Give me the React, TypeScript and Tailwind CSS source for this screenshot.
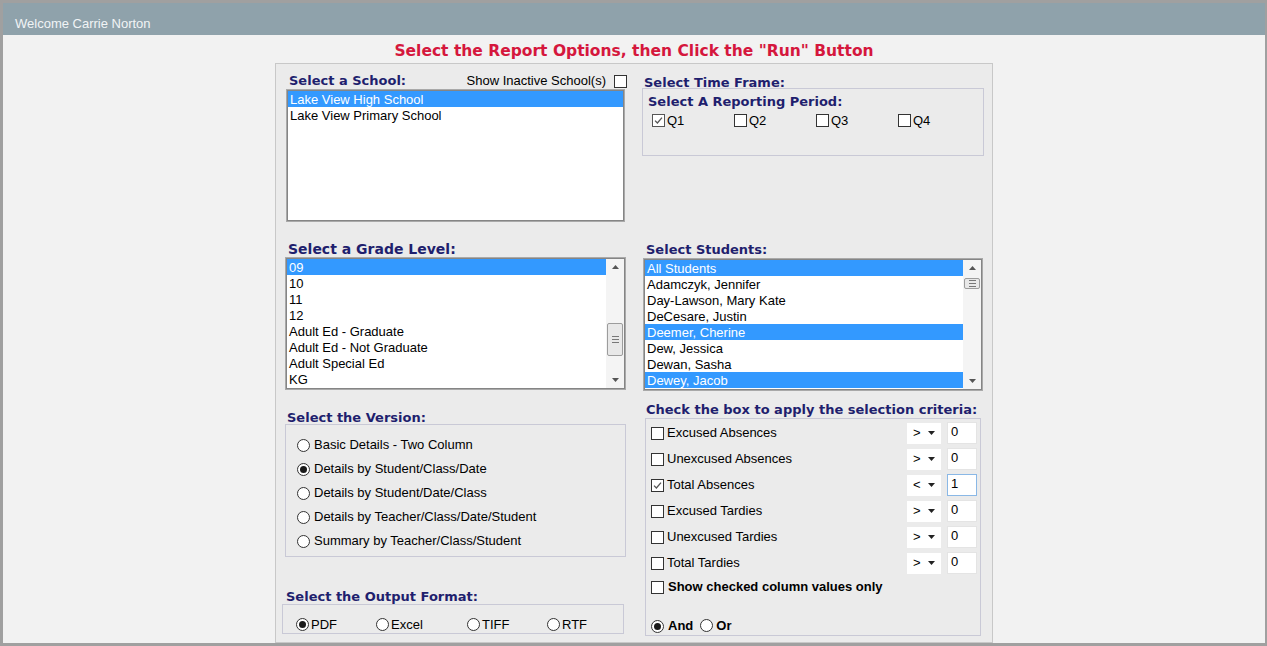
import React from "react";

function Check({ checked, dim }: { checked?: boolean; dim?: boolean }) {
  return (
    <span
      className={`inline-flex w-[13px] h-[13px] border ${dim ? "border-[#555]" : "border-[#333]"} bg-white items-center justify-center shrink-0`}
    >
      {checked && (
        <svg width="9" height="9" viewBox="0 0 9 9">
          <path d="M1 4.6 L3.4 7 L8 1.6" stroke="#555" strokeWidth="1.3" fill="none" />
        </svg>
      )}
    </span>
  );
}

function Radio({ checked }: { checked?: boolean }) {
  return (
    <span className="inline-flex w-[13px] h-[13px] rounded-full border border-[#333] bg-white items-center justify-center shrink-0">
      {checked && <span className="w-[7px] h-[7px] rounded-full bg-[#1a1a1a]" />}
    </span>
  );
}

function Label({ children, className = "" }: { children: React.ReactNode; className?: string }) {
  return (
    <div
      className={`font-['DejaVu_Sans',Verdana,sans-serif] font-bold text-[#1f1f6e] text-[13px] whitespace-nowrap ${className}`}
    >
      {children}
    </div>
  );
}

function ScrollBar({ thumbTop, thumbH }: { thumbTop: number; thumbH: number }) {
  return (
    <div className="w-[18px] h-full bg-[#f4f4f4] flex flex-col items-center relative shrink-0">
      <div className="h-[16px] w-full flex items-center justify-center">
        <svg width="7" height="4" viewBox="0 0 7 4">
          <path d="M0 4 L3.5 0 L7 4 Z" fill="#555" />
        </svg>
      </div>
      <div
        className="absolute left-[1px] right-[1px] border border-[#9c9c9c] bg-[#e8e8e8] rounded-[2px] flex flex-col items-center justify-center gap-[2px]"
        style={{ top: thumbTop, height: thumbH }}
      >
        <span className="block w-[7px] h-[1px] bg-[#777]" />
        <span className="block w-[7px] h-[1px] bg-[#777]" />
        <span className="block w-[7px] h-[1px] bg-[#777]" />
      </div>
      <div className="mt-auto h-[16px] w-full flex items-center justify-center">
        <svg width="7" height="4" viewBox="0 0 7 4">
          <path d="M0 0 L3.5 4 L7 0 Z" fill="#555" />
        </svg>
      </div>
    </div>
  );
}

function ListBox({
  items,
  selected,
  scroll,
  className = "",
}: {
  items: string[];
  selected: number[];
  scroll?: { top: number; h: number };
  className?: string;
}) {
  return (
    <div
      className={`h-[133px] bg-white border border-[#a9a9a9] p-[1px] shadow-[inset_0_0_0_1px_#858585] flex overflow-hidden ${className}`}
    >
      <div className="flex-1 flex flex-col min-w-0">
        {items.map((it, i) => (
          <div
            key={i}
            className={`h-[16px] leading-[17px] pl-[2px] text-[13px] font-['Liberation_Sans',Arial,sans-serif] whitespace-nowrap ${
              selected.includes(i) ? "bg-[#3399ff] text-white" : "text-black"
            }`}
          >
            {it}
          </div>
        ))}
      </div>
      {scroll && <ScrollBar thumbTop={scroll.top} thumbH={scroll.h} />}
    </div>
  );
}

function OpSelect({ op }: { op: string }) {
  return (
    <div className="w-[34px] h-[21px] bg-white flex items-center pl-[6px] pr-[6px] justify-between text-[13px] font-['Liberation_Sans',Arial,sans-serif] text-black">
      <span>{op}</span>
      <svg width="7" height="4" viewBox="0 0 7 4">
        <path d="M0 0 L3.5 4 L7 0 Z" fill="#222" />
      </svg>
    </div>
  );
}

function NumInput({ v, focus }: { v: string; focus?: boolean }) {
  return (
    <div
      className={`w-[30px] h-[22px] bg-white border ${focus ? "border-[#8ab8e6]" : "border-[#e4e4e4]"} pl-[3px] text-[13px] leading-[18px] font-['Liberation_Sans',Arial,sans-serif] text-black`}
    >
      {v}
    </div>
  );
}

export default function App() {
  const arial = "font-['Liberation_Sans',Arial,sans-serif] text-[13px] text-black";
  const criteria: [string, string, string, boolean][] = [
    ["Excused Absences", ">", "0", false],
    ["Unexcused Absences", ">", "0", false],
    ["Total Absences", "<", "1", true],
    ["Excused Tardies", ">", "0", false],
    ["Unexcused Tardies", ">", "0", false],
    ["Total Tardies", ">", "0", false],
  ];
  const versions = [
    "Basic Details - Two Column",
    "Details by Student/Class/Date",
    "Details by Student/Date/Class",
    "Details by Teacher/Class/Date/Student",
    "Summary by Teacher/Class/Student",
  ];
  return (
    <div className="w-[1267px] h-[646px] overflow-hidden bg-[#f2f2f2] border-t-[3px] border-l-[3px] border-r-[2px] border-b-[3px] border-[#a0a0a0] flex flex-col">
      <div className="h-[32px] shrink-0 bg-[#8fa2ab] flex items-center pl-[12px] pt-[10px] text-[13px] text-[#f1f4f6] font-['Liberation_Sans',Arial,sans-serif]">
        Welcome Carrie Norton
      </div>
      <div className="h-[28px] shrink-0 flex items-center justify-center pt-[6px] font-['DejaVu_Sans',Verdana,sans-serif] font-bold text-[15.5px] text-[#d5173d]">
        Select the Report Options, then Click the "Run" Button
      </div>
      <div className="ml-[272px] w-[718px] flex-1 bg-[#ebebeb] border border-[#c8c8c8] flex pt-[9px] pl-[9px]">
        {/* Left column */}
        <div className="w-[341px] flex flex-col shrink-0">
          <div className="h-[16px] flex items-center justify-between">
            <Label className="pl-[4px] h-[16px] leading-[16px]">Select a School:</Label>
            <div className={`flex items-center gap-[8px] ${arial}`}>
              <span>Show Inactive School(s)</span>
              <span className="mt-[5px] mr-[-1px]">
                <Check />
              </span>
            </div>
          </div>
          <ListBox
            className="ml-[1px] w-[339px]"
            items={["Lake View High School", "Lake View Primary School"]}
            selected={[0]}
          />
          <Label className="mt-[19px] pl-[3px] text-[14px] h-[16px] leading-[16px]">Select a Grade Level:</Label>
          <ListBox
            className="w-[341px]"
            items={["09", "10", "11", "12", "Adult Ed - Graduate", "Adult Ed - Not Graduate", "Adult Special Ed", "KG"]}
            selected={[0]}
            scroll={{ top: 64, h: 33 }}
          />
          <Label className="mt-[21px] pl-[2px] h-[13px] leading-[13px]">Select the Version:</Label>
          <div className="h-[133px] border border-[#c9c9d6] flex flex-col pt-[8px] pl-[11px]">
            {versions.map((v, i) => (
              <div key={v} className={`h-[24px] flex items-center gap-[4px] ${arial}`}>
                <Radio checked={i === 1} />
                <span>{v}</span>
              </div>
            ))}
          </div>
          <Label className="mt-[33px] pl-[1px] h-[14px] leading-[14px]">Select the Output Format:</Label>
          <div className="ml-[-3px] w-[342px] h-[30px] border border-[#c9c9d6] flex items-center pl-[13px] pt-[11px]">
            {[
              ["PDF", true, 80],
              ["Excel", false, 91],
              ["TIFF", false, 80],
              ["RTF", false, 60],
            ].map(([t, c, w]) => (
              <div key={t as string} className={`flex items-center gap-[2px] ${arial}`} style={{ width: w as number }}>
                <Radio checked={c as boolean} />
                <span>{t as string}</span>
              </div>
            ))}
          </div>
        </div>

        {/* Right column */}
        <div className="ml-[15px] w-[343px] flex flex-col shrink-0">
          <Label className="pl-[3px] pt-[2px] h-[15px] leading-[15px]">Select Time Frame:</Label>
          <div className="ml-[1px] w-[342px] h-[68px] border border-[#c9c9d6] flex flex-col pl-[5px] pt-[5px]">
            <Label className="h-[16px] leading-[16px]">Select A Reporting Period:</Label>
            <div className="flex mt-[1px] pl-[4px]">
              {["Q1", "Q2", "Q3", "Q4"].map((q, i) => (
                <div key={q} className={`w-[82px] flex items-center gap-[2px] ${arial}`}>
                  <Check checked={i === 0} dim={i === 0} />
                  <span>{q}</span>
                </div>
              ))}
            </div>
          </div>
          <Label className="mt-[86px] pl-[5px] h-[16px] leading-[16px]">Select Students:</Label>
          <ListBox
            className="ml-[2px] w-[340px]"
            items={[
              "All Students",
              "Adamczyk, Jennifer",
              "Day-Lawson, Mary Kate",
              "DeCesare, Justin",
              "Deemer, Cherine",
              "Dew, Jessica",
              "Dewan, Sasha",
              "Dewey, Jacob",
            ]}
            selected={[0, 4, 7]}
            scroll={{ top: 18, h: 11 }}
          />
          <Label className="mt-[11px] pl-[5px] h-[16px] leading-[16px]">Check the box to apply the selection criteria:</Label>
          <div className="ml-[4px] w-[336px] h-[218px] border border-[#c9c9d6] flex flex-col pt-[1px] pl-[5px] pr-[3px]">
            {criteria.map(([label, op, v, c]) => (
              <div key={label} className="h-[26px] flex items-center">
                <Check checked={c} />
                <span className={`ml-[3px] flex-1 ${arial}`}>{label}</span>
                <OpSelect op={op} />
                <div className="w-[6px]" />
                <NumInput v={v} focus={c} />
              </div>
            ))}
            <div className="h-[22px] flex items-center">
              <Check />
              <span className={`ml-[4px] font-bold ${arial}`}>Show checked column values only</span>
            </div>
            <div className="mt-auto mb-[-1px] h-[20px] flex items-center">
              <Radio checked />
              <span className={`ml-[4px] font-bold ${arial}`}>And</span>
              <span className="ml-[7px]">
                <Radio />
              </span>
              <span className={`ml-[3px] font-bold ${arial}`}>Or</span>
            </div>
          </div>
        </div>
      </div>
    </div>
  );
}
